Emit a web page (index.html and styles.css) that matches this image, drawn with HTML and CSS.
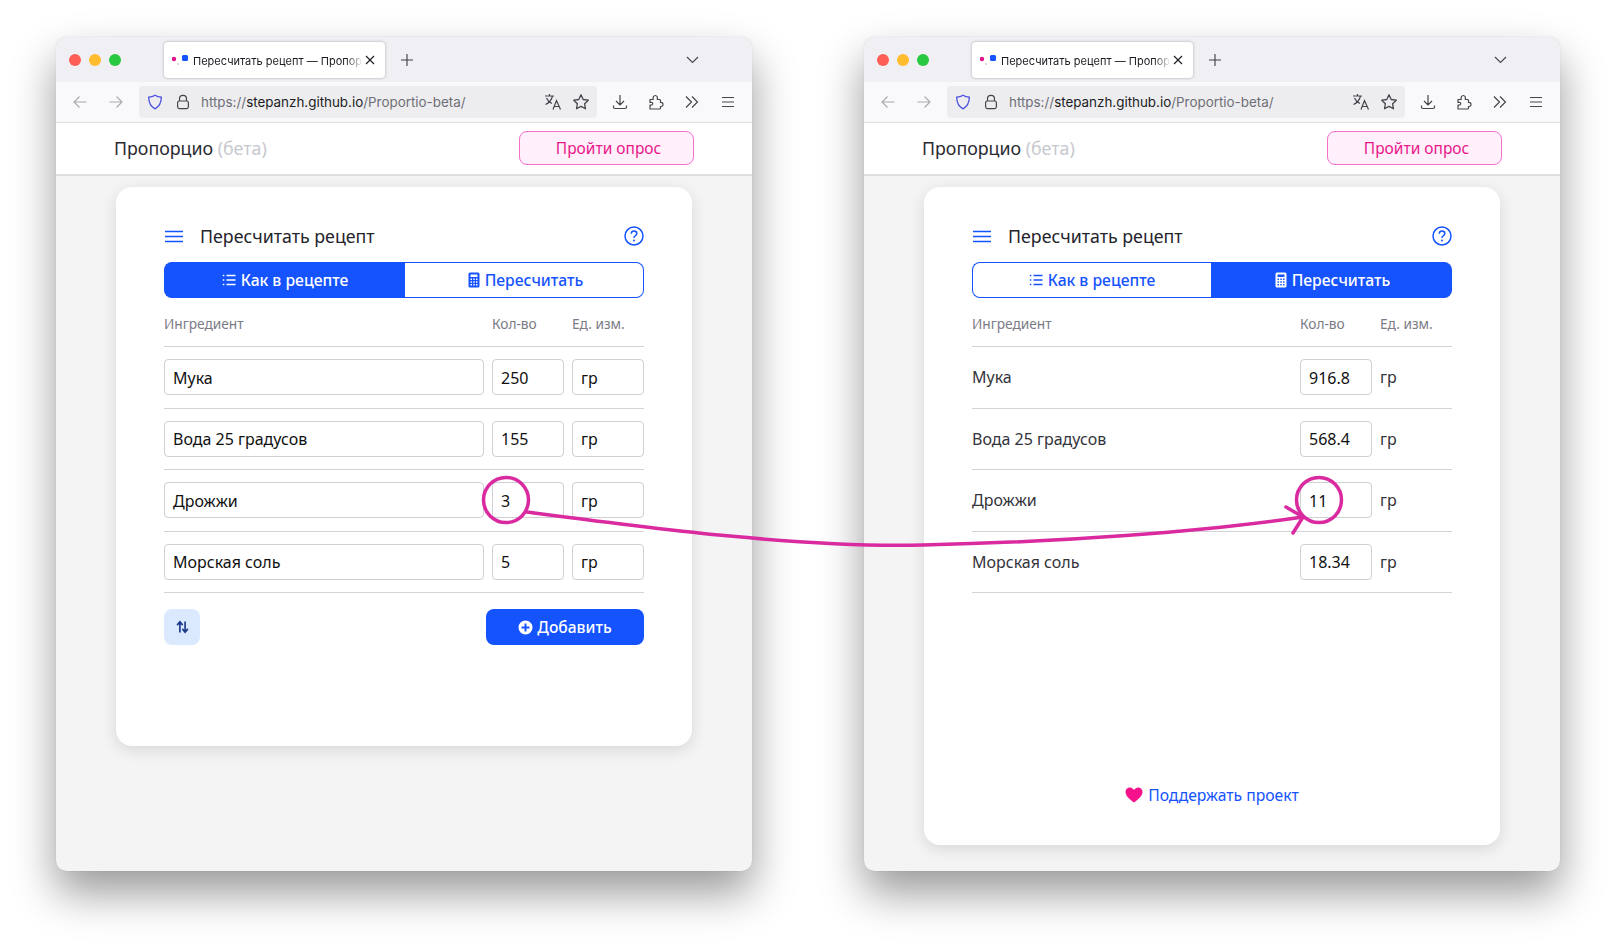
FILE: index.html
```html
<!DOCTYPE html>
<html lang="ru">
<head>
  <meta charset="UTF-8">
  <meta name="viewport" content="width=device-width, initial-scale=1.0">
  <title>Пропорцио</title>
  <link rel="stylesheet" href="styles.css">
</head>
<body>
  <svg class="defs" width="0" height="0">
    <symbol id="i-back" viewBox="0 0 16 16"><path d="M14.5 8H2M7.5 2.5 2 8l5.5 5.5" fill="none" stroke="currentColor" stroke-width="1.1"/></symbol>
    <symbol id="i-fwd" viewBox="0 0 16 16"><path d="M1.5 8H14M8.500 2.500 14 8l-5.500 5.500" fill="none" stroke="currentColor" stroke-width="1.1"/></symbol>
    <symbol id="i-shield" viewBox="0 0 16 16"><path d="M8 1.200c2 1.300 4 1.800 6.300 1.900 0 5.600-1.600 9.400-6.300 11.700C3.300 12.500 1.700 8.700 1.700 3.100 4 3 6 2.500 8 1.200Z" fill="none" stroke="#4a4fe0" stroke-width="1.300"/></symbol>
    <symbol id="i-lock" viewBox="0 0 16 16"><path d="M4.500 7V4.800a3.500 3.500 0 0 1 7 0V7" fill="none" stroke="currentColor" stroke-width="1.200"/><rect x="2.600" y="7" width="10.800" height="7.600" rx="1.800" fill="none" stroke="currentColor" stroke-width="1.200"/></symbol>
    <symbol id="i-trans" viewBox="0 0 18 18"><path d="M1 3h9M5.500 1v2M8.500 3C7.500 7 5 10 1.500 11.500M2.500 5c1 2.500 3 4.500 5.500 5.500M9 16.500 12.500 7.500 16.500 16.500M10.200 13.500h5" fill="none" stroke="currentColor" stroke-width="1.200"/></symbol>
    <symbol id="i-star" viewBox="0 0 18 18"><path d="m9 1.800 2.200 4.700 5.100.7-3.700 3.500.9 5.100L9 13.400l-4.500 2.400.9-5.100-3.700-3.500 5.100-.7Z" fill="none" stroke="currentColor" stroke-width="1.300" stroke-linejoin="round"/></symbol>
    <symbol id="i-down" viewBox="0 0 16 16"><path d="M8 1v9.500M4 7l4 4 4-4M1.500 11.500v1.500a1.500 1.500 0 0 0 1.500 1.500h10a1.500 1.500 0 0 0 1.500-1.500v-1.500" fill="none" stroke="currentColor" stroke-width="1.200"/></symbol>
    <symbol id="i-ext" viewBox="0 0 16 16"><path d="M2 5.500h3.200C4.700 3.500 5.500 1.500 7.300 1.500s2.500 2 2 4h2.200a1 1 0 0 1 1 1V8.500c2-.3 2.500 1 2.500 2s-.6 2.200-2.500 2V14a1 1 0 0 1-1 1H2V11c1.800.3 2.700-.5 2.700-1.500S3.800 8 2 8.500Z" fill="none" stroke="currentColor" stroke-width="1.200" stroke-linejoin="round"/></symbol>
    <symbol id="i-more" viewBox="0 0 16 16"><path d="m2 2.500 5.500 5.500L2 13.500M8 2.500l5.500 5.500L8 13.500" fill="none" stroke="currentColor" stroke-width="1.200"/></symbol>
    <symbol id="i-menu" viewBox="0 0 16 16"><path d="M2 3.500h12M2 8h12M2 12.500h12" fill="none" stroke="currentColor" stroke-width="1.200"/></symbol>
    <symbol id="i-list" viewBox="0 0 14 14"><path d="M4.500 2.500H13.500M4.500 7H13.500M4.500 11.500H13.500" fill="none" stroke="currentColor" stroke-width="1.300"/><path d="M.8 1.800h1.500v1.400H.8zM.8 6.300h1.500v1.400H.8zM.8 10.800h1.500v1.400H.8z" fill="currentColor"/></symbol>
    <symbol id="i-calc" viewBox="0 0 12 16"><path fill-rule="evenodd" d="M2 .5h8A1.500 1.500 0 0 1 11.500 2v12a1.500 1.500 0 0 1-1.500 1.500H2A1.500 1.500 0 0 1 .5 14V2A1.500 1.500 0 0 1 2 .5Zm.5 2v2.500h7V2.500Zm0 4v1.500h1.500V6.500Zm2.800 0v1.500h1.500V6.500Zm2.700 0v1.500h1.500V6.500Zm-5.500 2.800v1.500h1.500V9.300Zm2.800 0v1.500h1.500V9.300Zm2.700 0v1.500h1.500V9.300Zm-5.500 2.700v1.500h1.500V12Zm2.800 0v1.500h1.500V12Zm2.700 0v1.500h1.500V12Z" fill="currentColor"/></symbol>
    <symbol id="i-help" viewBox="0 0 20 20"><circle cx="10" cy="10" r="9" fill="none" stroke="currentColor" stroke-width="1.500"/><path d="M7.300 7.800c0-1.700 1.200-2.700 2.800-2.700s2.700 1 2.700 2.400c0 2.200-2.800 2.300-2.800 4.400" fill="none" stroke="currentColor" stroke-width="1.500"/><circle cx="10" cy="14.600" r="1" fill="currentColor"/></symbol>
  </svg>

  <div class="stage">
    <!-- окно слева: режим "как в рецепте" -->
    <section class="window">
      <div class="tabstrip">
        <div class="lights"><i class="red"></i><i class="yellow"></i><i class="green"></i></div>
        <div class="tab">
          <svg class="favicon" width="16" height="14" viewBox="0 0 16 14"><circle cx="2" cy="6" r="2.200" fill="#e0148c"/><rect x="10" y="2" width="6" height="6" rx="1.500" fill="#1553ff"/><circle cx="6" cy="11" r=".9" fill="#c8c8d0"/></svg>
          <span class="tab-title">Пересчитать рецепт — Пропорцио</span>
          <svg class="tab-close" width="10" height="10" viewBox="0 0 10 10"><path d="m1 1 8 8M9 1 1 9" stroke="currentColor" stroke-width="1.100"/></svg>
        </div>
        <svg class="tab-plus" width="12" height="12" viewBox="0 0 12 12"><path d="M6 0v12M0 6h12" stroke="currentColor" stroke-width="1.100"/></svg>
        <svg class="tab-list" width="13" height="8" viewBox="0 0 13 8"><path d="m1 1 5.500 5.500L12 1" fill="none" stroke="currentColor" stroke-width="1.200"/></svg>
      </div>
      <div class="toolbar">
        <svg class="tb-icon dim" width="16" height="16"><use href="#i-back"/></svg>
        <svg class="tb-icon dim fwd" width="16" height="16"><use href="#i-fwd"/></svg>
        <div class="urlbar">
          <svg class="shield" width="16" height="16"><use href="#i-shield"/></svg>
          <svg class="lock" width="16" height="16"><use href="#i-lock"/></svg>
          <span class="url">https://<b>stepanzh.github.io</b>/Proportio-beta/</span>
          <svg class="trans" width="18" height="18"><use href="#i-trans"/></svg>
          <svg class="star" width="18" height="18"><use href="#i-star"/></svg>
        </div>
        <div class="tb-right">
          <svg width="16" height="16"><use href="#i-down"/></svg>
          <svg width="16" height="16"><use href="#i-ext"/></svg>
          <svg width="16" height="16"><use href="#i-more"/></svg>
          <svg width="16" height="16"><use href="#i-menu"/></svg>
        </div>
      </div>
      <header class="page-head">
        <div class="brand">Пропорцио <span>(бета)</span></div>
        <a class="survey">Пройти опрос</a>
      </header>
      <main class="page">
        <div class="card card-short">
          <div class="card-title">
            <svg class="burger" width="18" height="13" viewBox="0 0 18 13"><path d="M0 1.500h18M0 6.500h18M0 11.500h18" stroke="currentColor" stroke-width="1.300"/></svg>
            <h1>Пересчитать рецепт</h1>
            <svg class="help" width="20" height="20"><use href="#i-help"/></svg>
          </div>
          <div class="segment">
            <div class="seg seg-left active"><svg width="14" height="14"><use href="#i-list"/></svg>Как в рецепте</div>
            <div class="seg seg-right"><svg width="12" height="16"><use href="#i-calc"/></svg>Пересчитать</div>
          </div>
          <div class="grid-row grid-head"><span>Ингредиент</span><span>Кол-во</span><span>Ед. изм.</span></div>
          <div class="grid-row"><div class="field">Мука</div><div class="field">250</div><div class="field">гр</div></div>
          <div class="grid-row"><div class="field">Вода 25 градусов</div><div class="field">155</div><div class="field">гр</div></div>
          <div class="grid-row"><div class="field">Дрожжи</div><div class="field">3</div><div class="field">гр</div></div>
          <div class="grid-row"><div class="field">Морская соль</div><div class="field">5</div><div class="field">гр</div></div>
          <div class="actions">
            <button class="swap" type="button"><svg width="13" height="14" viewBox="0 0 14 14"><path d="M4.200 13V2M1.200 5l3-3.500 3 3.500M9.800 1V12M6.800 9l3 3.500 3-3.500" fill="none" stroke="currentColor" stroke-width="1.800"/></svg></button>
            <button class="add" type="button"><svg width="15" height="15" viewBox="0 0 15 15"><path fill-rule="evenodd" d="M7.500.5a7 7 0 1 1 0 14 7 7 0 0 1 0-14ZM6.500 3.500v3h-3v2h3v3h2v-3h3v-2h-3v-3Z" fill="currentColor"/></svg>Добавить</button>
          </div>
        </div>
      </main>
    </section>

    <!-- окно справа: режим "пересчитать" -->
    <section class="window">
      <div class="tabstrip">
        <div class="lights"><i class="red"></i><i class="yellow"></i><i class="green"></i></div>
        <div class="tab">
          <svg class="favicon" width="16" height="14" viewBox="0 0 16 14"><circle cx="2" cy="6" r="2.200" fill="#e0148c"/><rect x="10" y="2" width="6" height="6" rx="1.500" fill="#1553ff"/><circle cx="6" cy="11" r=".9" fill="#c8c8d0"/></svg>
          <span class="tab-title">Пересчитать рецепт — Пропорцио</span>
          <svg class="tab-close" width="10" height="10" viewBox="0 0 10 10"><path d="m1 1 8 8M9 1 1 9" stroke="currentColor" stroke-width="1.100"/></svg>
        </div>
        <svg class="tab-plus" width="12" height="12" viewBox="0 0 12 12"><path d="M6 0v12M0 6h12" stroke="currentColor" stroke-width="1.100"/></svg>
        <svg class="tab-list" width="13" height="8" viewBox="0 0 13 8"><path d="m1 1 5.500 5.500L12 1" fill="none" stroke="currentColor" stroke-width="1.200"/></svg>
      </div>
      <div class="toolbar">
        <svg class="tb-icon dim" width="16" height="16"><use href="#i-back"/></svg>
        <svg class="tb-icon dim fwd" width="16" height="16"><use href="#i-fwd"/></svg>
        <div class="urlbar">
          <svg class="shield" width="16" height="16"><use href="#i-shield"/></svg>
          <svg class="lock" width="16" height="16"><use href="#i-lock"/></svg>
          <span class="url">https://<b>stepanzh.github.io</b>/Proportio-beta/</span>
          <svg class="trans" width="18" height="18"><use href="#i-trans"/></svg>
          <svg class="star" width="18" height="18"><use href="#i-star"/></svg>
        </div>
        <div class="tb-right">
          <svg width="16" height="16"><use href="#i-down"/></svg>
          <svg width="16" height="16"><use href="#i-ext"/></svg>
          <svg width="16" height="16"><use href="#i-more"/></svg>
          <svg width="16" height="16"><use href="#i-menu"/></svg>
        </div>
      </div>
      <header class="page-head">
        <div class="brand">Пропорцио <span>(бета)</span></div>
        <a class="survey">Пройти опрос</a>
      </header>
      <main class="page">
        <div class="card card-tall">
          <div class="card-title">
            <svg class="burger" width="18" height="13" viewBox="0 0 18 13"><path d="M0 1.500h18M0 6.500h18M0 11.500h18" stroke="currentColor" stroke-width="1.300"/></svg>
            <h1>Пересчитать рецепт</h1>
            <svg class="help" width="20" height="20"><use href="#i-help"/></svg>
          </div>
          <div class="segment">
            <div class="seg seg-left"><svg width="14" height="14"><use href="#i-list"/></svg>Как в рецепте</div>
            <div class="seg seg-right active"><svg width="12" height="16"><use href="#i-calc"/></svg>Пересчитать</div>
          </div>
          <div class="grid-row grid-head"><span>Ингредиент</span><span>Кол-во</span><span>Ед. изм.</span></div>
          <div class="grid-row"><div class="plain">Мука</div><div class="field">916.8</div><div class="plain">гр</div></div>
          <div class="grid-row"><div class="plain">Вода 25 градусов</div><div class="field">568.4</div><div class="plain">гр</div></div>
          <div class="grid-row"><div class="plain">Дрожжи</div><div class="field">11</div><div class="plain">гр</div></div>
          <div class="grid-row"><div class="plain">Морская соль</div><div class="field">18.34</div><div class="plain">гр</div></div>
          <a class="support"><svg width="18" height="16" viewBox="0 0 18 16"><path d="M9 15.500C4 11.500.5 8.500.5 4.900.5 2.300 2.500.500 4.800.500c1.700 0 3.200.9 4.200 2.600C10 1.400 11.500.500 13.200.500c2.300 0 4.300 1.800 4.300 4.400 0 3.600-3.500 6.600-8.500 10.600Z" fill="#f5108c"/></svg>Поддержать проект</a>
        </div>
      </main>
    </section>
  </div>

  <!-- стрелка поверх обоих окон -->
  <svg class="arrow" width="1616" height="945" viewBox="0 0 1616 945">
    <g fill="none" stroke="#d92aa0" stroke-width="3.500" stroke-linecap="round" stroke-linejoin="round">
      <circle cx="506" cy="500" r="22.500"/>
      <circle cx="1319" cy="500" r="22.500"/>
      <path d="M527 512C650 528 800 548 923 545C1060 542 1200 532 1303 517"/>
      <path d="M1286 507 1303 517 1293 533"/>
    </g>
  </svg>
</body>
</html>
```

FILE: styles.css
```css
* {
  box-sizing: border-box;
}

body {
  margin: 0;
  background: #fff;
  font-family: "Noto Sans", Arial, sans-serif;
  color: #1c1c22;
  height: 945px;
  overflow: hidden;
}

.defs {
  display: block;
  height: 0;
}

.stage {
  display: flex;
  gap: 112px;
  padding: 37px 0 0 56px;
}

.window {
  width: 696px;
  height: 834px;
  border-radius: 10px;
  overflow: hidden;
  display: flex;
  flex-direction: column;
  background: #f4f4f4;
  box-shadow: 0 0 1px rgba(0,0,0,0.25), 0 22px 44px rgba(0,0,0,0.4);
}

/* вкладки */
.tabstrip {
  height: 45px;
  flex: none;
  display: flex;
  align-items: center;
  background: #f0f0f4;
  padding: 0 53px 0 13px;
}

.lights {
  display: flex;
  gap: 8px;
  width: 95px;
  flex: none;
}

.lights i {
  width: 12px;
  height: 12px;
  border-radius: 50%;
}

.red { background: #ff5f57; }
.yellow { background: #febc2e; }
.green { background: #28c840; }

.tab {
  width: 221px;
  height: 36px;
  flex: none;
  display: flex;
  align-items: center;
  padding: 0 10px 0 8px;
  background: #fff;
  border-radius: 4px;
  box-shadow: 0 0 3px rgba(0,0,0,0.3);
  font-family: Inter, sans-serif;
  font-size: 11px;
}

.favicon {
  flex: none;
  margin-right: 5px;
}

.tab-title {
  flex: 1;
  padding-top: 2px;
  overflow: hidden;
  white-space: nowrap;
  -webkit-mask-image: linear-gradient(to right, #000 90%, transparent);
  mask-image: linear-gradient(to right, #000 90%, transparent);
}

.tab-close {
  flex: none;
  margin-left: 2px;
}

.tab-plus {
  margin-left: 16px;
  flex: none;
  color: #3a3a42;
}

.tab-list {
  margin-left: auto;
  flex: none;
  color: #4a4a52;
}

/* панель адреса */
.toolbar {
  height: 41px;
  flex: none;
  display: flex;
  align-items: center;
  background: #f9f9fb;
  border-bottom: 1px solid #e0e0e4;
  padding: 0 16px 0 16px;
  color: #45454d;
}

.tb-icon {
  flex: none;
}

.dim {
  color: #a8a8b0;
}

.fwd {
  margin-left: 20px;
}

.urlbar {
  width: 458px;
  height: 32px;
  flex: none;
  margin-left: 15px;
  display: flex;
  align-items: center;
  background: #ededf0;
  border-radius: 4px;
  padding: 0 8px;
}

.lock {
  margin-left: 12px;
}

.url {
  margin-left: 10px;
  font-family: Inter, sans-serif;
  font-size: 13.4px;
  color: #6f6f77;
  white-space: nowrap;
}

.url b {
  font-weight: 400;
  color: #1c1c22;
}

.trans {
  margin-left: auto;
}

.star {
  margin-left: 10px;
  margin-right: -1px;
}

.tb-right {
  flex: 1;
  display: flex;
  justify-content: space-between;
  padding-left: 15px;
}

/* шапка страницы */
.page-head {
  height: 53px;
  flex: none;
  display: flex;
  align-items: center;
  justify-content: space-between;
  padding: 0 58px 1px 58px;
  background: #fff;
  border-bottom: 2px solid #dedee0;
}

.brand {
  font-size: 17.8px;
  color: #2a2a32;
}

.brand span {
  color: #c8c8d0;
}

.survey {
  width: 175px;
  height: 34px;
  display: flex;
  align-items: center;
  justify-content: center;
  padding-left: 4px;
  border: 1px solid #f56fd0;
  border-radius: 8px;
  background: #fff0fb;
  color: #e8178a;
  font-size: 15.5px;
}

.page {
  flex: 1;
  padding: 11px 60px 0;
}

.card {
  background: #fff;
  border-radius: 16px;
  padding: 37px 48px 0;
  display: flex;
  flex-direction: column;
  box-shadow: 0 4px 16px rgba(0,0,0,0.12);
}

.card-short {
  height: 559px;
}

.card-tall {
  height: 658px;
}

.card-title {
  display: flex;
  align-items: center;
  height: 24px;
  color: #1553ff;
}

.burger {
  flex: none;
  margin: 0 17px 0 1px;
}

.card-title h1 {
  flex: 1;
  margin: 0;
  font-size: 17.8px;
  font-weight: 400;
  color: #24242c;
}

/* переключатель */
.segment {
  display: flex;
  height: 36px;
  margin-top: 14px;
}

.seg {
  display: flex;
  align-items: center;
  justify-content: center;
  gap: 5px;
  font-size: 15.7px;
  font-weight: 500;
  border: 1px solid #1553ff;
  color: #1553ff;
  background: #fff;
}

.seg-left {
  width: 241px;
  border-right: 0;
  border-radius: 8px 0 0 8px;
}

.seg-right {
  width: 239px;
  padding-left: 3px;
  border-left: 0;
  border-radius: 0 8px 8px 0;
}

.card-tall .seg-left {
  width: 239px;
}

.card-tall .seg-right {
  width: 241px;
}

.seg.active {
  background: #1553ff;
  color: #fff;
}

/* таблица */
.grid-row {
  display: grid;
  grid-template-columns: 320px 72px 72px;
  gap: 8px;
  align-items: center;
  height: 61.5px;
  border-bottom: 1.5px solid #d2d2d8;
  font-size: 16px;
}

.grid-head {
  height: 49px;
  font-size: 13.7px;
  color: #7b7b85;
  padding-top: 2px;
}

.field {
  height: 36px;
  display: flex;
  align-items: center;
  padding: 1px 8px 0;
  border: 1px solid #cfcfd4;
  border-radius: 4px;
  background: #fff;
  color: #111;
}

.plain {
  color: #33333b;
}

.actions {
  display: flex;
  justify-content: space-between;
  margin-top: 16px;
}

.swap {
  width: 36px;
  height: 36px;
  padding: 0;
  display: flex;
  align-items: center;
  justify-content: center;
  border: 0;
  border-radius: 8px;
  background: #dbe9ff;
  color: #1d3a8a;
}

.add {
  width: 158px;
  height: 36px;
  display: flex;
  align-items: center;
  justify-content: center;
  gap: 4px;
  border: 0;
  border-radius: 8px;
  background: #1553ff;
  color: #fff;
  font-family: inherit;
  font-size: 15.6px;
  font-weight: 500;
}

.support {
  margin-top: auto;
  margin-bottom: 39px;
  display: flex;
  align-items: center;
  justify-content: center;
  gap: 5px;
  font-size: 15.7px;
  color: #1553ff;
}

/* стрелка */
.arrow {
  position: absolute;
  left: 0;
  top: 0;
  pointer-events: none;
}
```
